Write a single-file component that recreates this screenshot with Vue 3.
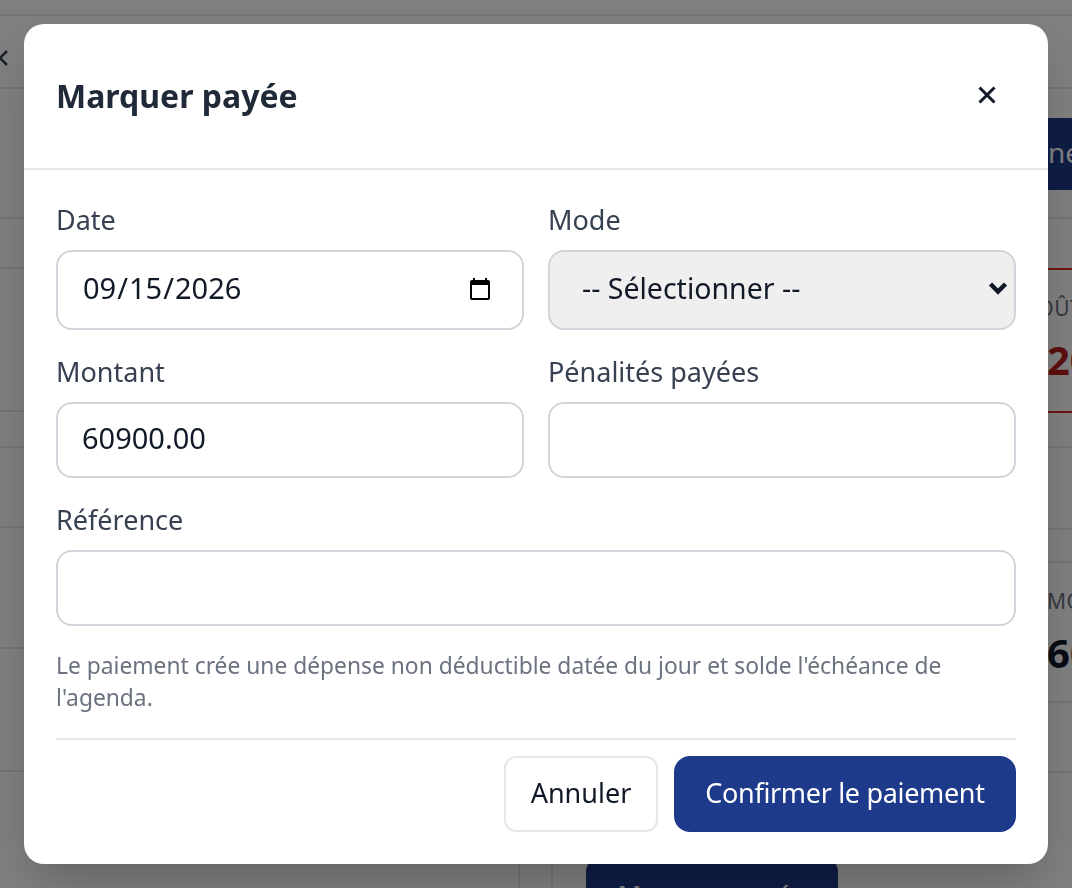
<template>
  <div class="page">
    <div class="top-strip"></div>
    <div class="col">
      <div v-for="(h, i) in leftRows" :key="i" class="row" :style="{ height: h + 'px' }">
        <svg v-if="i === 0" class="back-close" width="18" height="18" viewBox="0 0 18 18" fill="none" stroke="#374151" stroke-width="2.5">
          <path d="M2 2l14 14M16 2L2 16" />
        </svg>
      </div>
      <div class="left-rest"></div>
    </div>
    <div class="col col-right">
      <div v-for="(r, i) in rightRows" :key="i" class="row" :class="r.cls" :style="{ height: r.h + 'px' }">
        <span v-if="r.label" class="back-label">{{ r.label }}</span>
        <span v-if="r.value" class="back-value">{{ r.value }}</span>
        <span v-if="r.action" class="back-action">{{ r.action }}</span>
      </div>
      <div class="right-rest">
        <button class="back-btn">Marquer payée</button>
      </div>
    </div>
  </div>

  <div class="modal-backdrop">
    <div class="modal-box">
      <div class="header">
        <h2>Marquer payée</h2>
        <button class="close-btn" aria-label="Fermer">
          <svg width="24" height="24" viewBox="0 0 24 24" fill="none" stroke="#111827" stroke-width="3">
            <path d="M4.5 4.5l15 15M19.5 4.5l-15 15" />
          </svg>
        </button>
      </div>

      <div class="body">
        <div class="form">
          <div class="field">
            <label>Date</label>
            <input v-model="form.date" type="date" class="input tall" />
          </div>
          <div class="field">
            <label>Mode</label>
            <div class="select-wrap">
              <select v-model="form.mode" class="input tall select">
                <option value="">-- Sélectionner --</option>
              </select>
              <svg class="chevron" width="20" height="14" viewBox="0 0 20 14" fill="none" stroke="#111827" stroke-width="4.5">
                <path d="M2.5 3l7.5 7.5L17.5 3" />
              </svg>
            </div>
          </div>
          <div class="field">
            <label>Montant</label>
            <input v-model="form.amount" class="input" />
          </div>
          <div class="field">
            <label>Pénalités payées</label>
            <input v-model="form.penalty" class="input" />
          </div>
          <div class="field wide">
            <label>Référence</label>
            <input v-model="form.reference" class="input" />
          </div>
        </div>

        <p class="note">
          Le paiement crée une dépense non déductible datée du jour et solde l'échéance de l'agenda.
        </p>

        <div class="btn-area">
          <button class="cancel">Annuler</button>
          <button class="submit">Confirmer le paiement</button>
        </div>
      </div>
    </div>
  </div>
</template>

<script setup>
import { ref } from 'vue'

const form = ref({
  date: '2026-09-15',
  mode: '',
  amount: '60900.00',
  penalty: '',
  reference: '',
})

// page behind the dialog, only its edges are visible
const leftRows = [73, 130, 50, 143, 36, 80, 121, 123]
const rightRows = [
  { h: 73 },
  { h: 130, cls: 'has-action', action: 'né' },
  { h: 49, cls: 'no-line' },
  { h: 145, cls: 'stat red', label: 'COÛT', value: '120' },
  { h: 35 },
  { h: 82 },
  { h: 33 },
  { h: 140, cls: 'stat plain', label: 'MO', value: '60' },
  { h: 70 },
]
</script>

<style>
html,
body {
  margin: 0;
  height: 100%;
  overflow: hidden;
  background: #fff;
}
</style>

<style scoped>
.page {
  display: grid;
  grid-template-columns: 519px minmax(0, 1fr);
  grid-template-rows: 16px minmax(0, 1fr);
  height: 888px;
  overflow: hidden;
  background: #fff;
  font-family: 'Noto Sans', sans-serif;
}

.top-strip {
  grid-column: 1 / 3;
  box-sizing: border-box;
  border-bottom: 2px solid #e5e7eb;
}

.col {
  display: flex;
  flex-direction: column;
  min-width: 0;
}

.col-right {
  margin-left: 32px;
}

.row {
  position: relative;
  flex: none;
  box-sizing: border-box;
  display: flex;
  flex-direction: column;
  border-bottom: 2px solid #e5e7eb;
  overflow: hidden;
}

.no-line {
  border-bottom: none;
}

.left-rest {
  flex: 1;
  border-right: 2px solid #e5e7eb;
  margin-right: -1px;
}

.right-rest {
  flex: 1;
  padding: 83px 0 0 33px;
  border-left: 2px solid #e5e7eb;
}

.back-close {
  position: absolute;
  left: -9px;
  top: 33px;
}

.has-action {
  padding-top: 29px;
}

.back-action {
  align-self: flex-end;
  box-sizing: border-box;
  height: 72px;
  width: 200px;
  margin-right: -20px;
  padding: 16px 0 0 156px;
  border-radius: 16px;
  background: #1e3a8a;
  color: #fff;
  font-size: 28px;
  line-height: 36px;
}

.stat {
  white-space: nowrap;
}

.stat.red {
  border-top: 2px solid #dc2626;
  border-bottom: 2px solid #dc2626;
  padding: 24px 0 0 473px;
}

.stat.plain {
  padding: 24px 0 0 496px;
}

.back-label {
  font-size: 21px;
  line-height: 28px;
  letter-spacing: 0.5px;
  color: #6b7280;
}

.back-value {
  margin-top: 14px;
  font-size: 40px;
  line-height: 48px;
  font-weight: 700;
  color: #111827;
}

.stat.red .back-value {
  color: #b91c1c;
}

.back-btn {
  width: 252px;
  height: 76px;
  border: none;
  border-radius: 16px;
  background: #1e3a8a;
  color: #fff;
  font: 500 26px 'Noto Sans', sans-serif;
}

.modal-backdrop {
  position: fixed;
  inset: 0;
  background: rgba(0, 0, 0, 0.5);
  display: flex;
  justify-content: center;
  align-items: center;
  z-index: 9999;
}

.modal-box {
  width: 1024px;
  height: 840px;
  background: white;
  border-radius: 20px;
  box-shadow: 0 25px 50px -12px rgba(0, 0, 0, 0.25);
  color: #111827;
  font-family: 'Noto Sans', sans-serif;
}

.header {
  box-sizing: border-box;
  height: 146px;
  display: flex;
  justify-content: space-between;
  align-items: center;
  padding: 0 32px 2px;
  border-bottom: 2px solid #e5e7eb;
}

h2 {
  margin: 0;
  font-size: 32px;
  font-weight: 700;
  color: #1f2937;
}

.close-btn {
  display: flex;
  padding: 0;
  margin-right: 17px;
  background: none;
  border: none;
  cursor: pointer;
}

.body {
  padding: 32px 32px 0;
}

.form {
  display: grid;
  grid-template-columns: 1fr 1fr;
  gap: 24px;
}

.field {
  display: flex;
  flex-direction: column;
  gap: 12px;
}

.wide {
  grid-column: 1 / 3;
}

label {
  font-size: 27px;
  line-height: 36px;
  color: #374151;
}

.input {
  box-sizing: border-box;
  width: 100%;
  height: 76px;
  padding: 0 24px 5px;
  border: 2px solid #d1d5db;
  border-radius: 16px;
  background: #fff;
  color: #111827;
  font: 29px 'Noto Sans', sans-serif;
}

.tall {
  height: 80px;
}

.select {
  appearance: none;
  padding-left: 32px;
  background: #efefef;
  font-size: 28.5px;
}

.select-wrap {
  position: relative;
}

.chevron {
  position: absolute;
  right: 8px;
  top: 31px;
  pointer-events: none;
}

.input::-webkit-calendar-picker-indicator {
  width: 26px;
  height: 26px;
  padding: 0;
  margin: 5px 5px 0 0;
}

.note {
  margin: 24px 0 0;
  padding-bottom: 24px;
  border-bottom: 2px solid #e5e7eb;
  font-size: 22.8px;
  line-height: 32px;
  color: #6b7280;
}

.btn-area {
  display: flex;
  justify-content: flex-end;
  gap: 16px;
  margin-top: 16px;
}

.cancel,
.submit {
  height: 76px;
  padding: 0 0 4px;
  font: 27px 'Noto Sans', sans-serif;
  cursor: pointer;
}

.cancel {
  width: 154px;
  border: 2px solid #e5e7eb;
  border-radius: 12px;
  background: #fff;
  color: #111827;
}

.submit {
  width: 342px;
  border: none;
  border-radius: 16px;
  background: #1e3a8a;
  color: #fff;
  letter-spacing: -0.33px;
}
</style>
